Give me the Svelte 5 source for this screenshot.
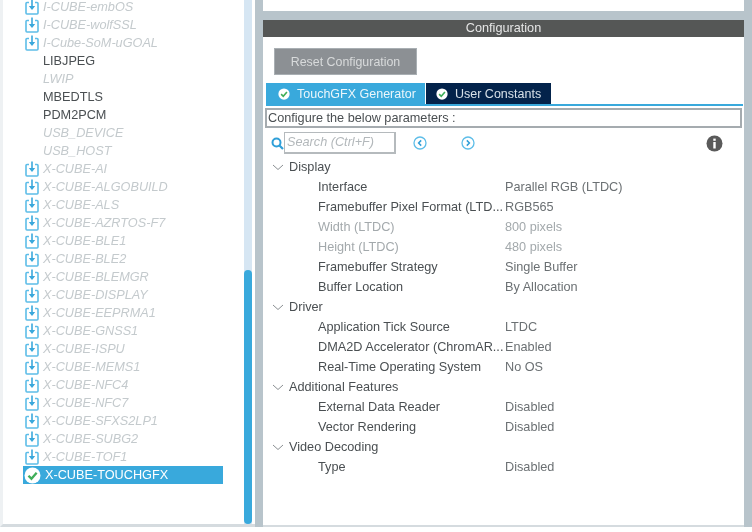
<script>
  const components = [
    { name: 'I-CUBE-embOS', kind: 'pack' },
    { name: 'I-CUBE-wolfSSL', kind: 'pack' },
    { name: 'I-Cube-SoM-uGOAL', kind: 'pack' },
    { name: 'LIBJPEG', kind: 'plain' },
    { name: 'LWIP', kind: 'off' },
    { name: 'MBEDTLS', kind: 'plain' },
    { name: 'PDM2PCM', kind: 'plain' },
    { name: 'USB_DEVICE', kind: 'off' },
    { name: 'USB_HOST', kind: 'off' },
    { name: 'X-CUBE-AI', kind: 'pack' },
    { name: 'X-CUBE-ALGOBUILD', kind: 'pack' },
    { name: 'X-CUBE-ALS', kind: 'pack' },
    { name: 'X-CUBE-AZRTOS-F7', kind: 'pack' },
    { name: 'X-CUBE-BLE1', kind: 'pack' },
    { name: 'X-CUBE-BLE2', kind: 'pack' },
    { name: 'X-CUBE-BLEMGR', kind: 'pack' },
    { name: 'X-CUBE-DISPLAY', kind: 'pack' },
    { name: 'X-CUBE-EEPRMA1', kind: 'pack' },
    { name: 'X-CUBE-GNSS1', kind: 'pack' },
    { name: 'X-CUBE-ISPU', kind: 'pack' },
    { name: 'X-CUBE-MEMS1', kind: 'pack' },
    { name: 'X-CUBE-NFC4', kind: 'pack' },
    { name: 'X-CUBE-NFC7', kind: 'pack' },
    { name: 'X-CUBE-SFXS2LP1', kind: 'pack' },
    { name: 'X-CUBE-SUBG2', kind: 'pack' },
    { name: 'X-CUBE-TOF1', kind: 'pack' },
    { name: 'X-CUBE-TOUCHGFX', kind: 'selected' }
  ];

  const groups = [
    {
      title: 'Display',
      rows: [
        { label: 'Interface', value: 'Parallel RGB (LTDC)' },
        { label: 'Framebuffer Pixel Format (LTD...', value: 'RGB565' },
        { label: 'Width (LTDC)', value: '800 pixels', muted: true },
        { label: 'Height (LTDC)', value: '480 pixels', muted: true },
        { label: 'Framebuffer Strategy', value: 'Single Buffer' },
        { label: 'Buffer Location', value: 'By Allocation' }
      ]
    },
    {
      title: 'Driver',
      rows: [
        { label: 'Application Tick Source', value: 'LTDC' },
        { label: 'DMA2D Accelerator (ChromAR...', value: 'Enabled' },
        { label: 'Real-Time Operating System', value: 'No OS' }
      ]
    },
    {
      title: 'Additional Features',
      rows: [
        { label: 'External Data Reader', value: 'Disabled' },
        { label: 'Vector Rendering', value: 'Disabled' }
      ]
    },
    {
      title: 'Video Decoding',
      rows: [{ label: 'Type', value: 'Disabled' }]
    }
  ];
</script>

{#snippet check(size)}
  <svg width={size} height={size} viewBox="0 0 16 16" class="check">
    <circle cx="8" cy="8" r="7.5" fill="#fff" />
    <path d="M4.2 8.2 L7 11 L11.9 5.4" fill="none" stroke="#3fae5a" stroke-width="2.2" />
  </svg>
{/snippet}

<div class="window">
  <aside class="left">
    <div class="list">
      {#each components as item}
        <div class="row {item.kind}">
          <span class="icon">
            {#if item.kind === 'pack'}
              <svg width="14" height="16" viewBox="0 0 14 16">
                <path d="M4 3.5 H2 Q1 3.5 1 4.5 V14 Q1 15 2 15 H12 Q13 15 13 14 V4.5 Q13 3.5 12 3.5 H10" fill="none" stroke="#5dbde8" stroke-width="1.6" />
                <path d="M7 0.5 V8" stroke="#3aa8dc" stroke-width="1.6" />
                <path d="M3.8 7 H10.2 L7 11 Z" fill="#3aa8dc" />
              </svg>
            {:else if item.kind === 'selected'}
              {@render check(17)}
            {/if}
          </span>
          <span class="name">{item.name}</span>
        </div>
      {/each}
    </div>
    <div class="track"><div class="thumb"></div></div>
  </aside>

  <main class="right">
    <div class="top-strip"></div>
    <section class="panel">
      <header class="title">Configuration</header>
      <button class="reset">Reset Configuration</button>
      <div class="tabs">
        <div class="tab active">{@render check(12)}<span>TouchGFX Generator</span></div>
        <div class="tab">{@render check(12)}<span>User Constants</span></div>
      </div>
      <div class="hint">Configure the below parameters :</div>
      <div class="search-bar">
        <svg class="lens" width="13" height="13" viewBox="0 0 13 13">
          <circle cx="5.5" cy="5.5" r="4" fill="none" stroke="#2f9fd8" stroke-width="2" />
          <path d="M8.5 8.5 L12 12" stroke="#2f9fd8" stroke-width="2.2" />
        </svg>
        <div class="search">Search (Ctrl+F)</div>
        <svg class="nav first" width="14" height="14" viewBox="0 0 14 14">
          <circle cx="7" cy="7" r="6" fill="none" stroke="#5dbde8" stroke-width="1.3" />
          <path d="M8.2 4.4 L5.6 7 L8.2 9.6" fill="none" stroke="#2f9fd8" stroke-width="1.5" />
        </svg>
        <svg class="nav" width="14" height="14" viewBox="0 0 14 14">
          <circle cx="7" cy="7" r="6" fill="none" stroke="#5dbde8" stroke-width="1.3" />
          <path d="M5.8 4.4 L8.4 7 L5.8 9.6" fill="none" stroke="#2f9fd8" stroke-width="1.5" />
        </svg>
        <svg class="info" width="17" height="17" viewBox="0 0 17 17">
          <circle cx="8.5" cy="8.5" r="8" fill="#5a5a5a" />
          <rect x="7.3" y="7" width="2.4" height="6.5" fill="#fff" />
          <rect x="7.3" y="3.6" width="2.4" height="2.2" fill="#fff" />
        </svg>
      </div>
      <div class="params">
        {#each groups as group}
          <div class="group">
            <svg width="12" height="7" viewBox="0 0 12 7">
              <path d="M1 1 L6 5.5 L11 1" fill="none" stroke="#8a8f92" stroke-width="1" />
            </svg>
            <span>{group.title}</span>
          </div>
          {#each group.rows as row}
            <div class="param" class:muted={row.muted}>
              <span class="label">{row.label}</span>
              <span class="value">{row.value}</span>
            </div>
          {/each}
        {/each}
      </div>
    </section>
  </main>
</div>

<style>
  :global(body) {
    background: #fff;
  }

  .window {
    display: flex;
    width: 752px;
    height: 532px;
    overflow: hidden;
    font-family: "Liberation Sans", Arial, sans-serif;
    font-size: 12.7px;
    color: #4a4f52;
    filter: blur(0.3px);
  }

  .left {
    display: flex;
    justify-content: space-between;
    box-sizing: border-box;
    width: 255px;
    height: 527px;
    background: #fff;
    border-left: 3px solid #eef1f3;
    border-bottom: 3px solid #d5dbdf;
  }

  .list {
    margin-top: -2px;
    padding-left: 20px;
    width: 200px;
  }

  .row {
    display: flex;
    align-items: center;
    width: 200px;
    height: 18px;
  }

  .icon {
    display: flex;
    justify-content: center;
    align-items: center;
    width: 18px;
    margin-right: 2px;
    height: 18px;
  }

  .name {
    white-space: nowrap;
  }

  .row.pack .name,
  .row.off .name {
    font-style: italic;
    color: #c4cacd;
  }

  .row.selected {
    background: #39a9dc;
    color: #fff;
  }

  .row.selected .name {
    margin-left: 2px;
  }

  .track {
    width: 8px;
    margin-right: 3px;
    background: #d6e6f3;
  }

  .thumb {
    margin-top: 270px;
    height: 254px;
    background: #39a9dc;
    border-radius: 4px;
  }

  .right {
    display: flex;
    flex-direction: column;
    padding: 0 8px;
    width: 497px;
    box-sizing: border-box;
    height: 527px;
    background: #b8c4cb;
  }

  .top-strip {
    height: 11px;
    background: #fff;
    flex: none;
  }

  .panel {
    flex: 1;
    margin-top: 9px;
    background: #fff;
    border-bottom: 2px solid #d5dbdf;
    min-height: 0;
  }

  .title {
    height: 17px;
    line-height: 17px;
    background: #555756;
    color: #e6e6e6;
    text-align: center;
  }

  .reset {
    display: block;
    margin: 11px 0 0 11px;
    width: 143px;
    height: 27px;
    padding: 0;
    border: 1px solid #a9afb3;
    background: #8c9094;
    color: #d8dadb;
    font: inherit;
    font-size: 12.4px;
  }

  .tabs {
    display: flex;
    margin: 8px 1px 0 3px;
    gap: 1px;
    border-bottom: 2px solid #39a9dc;
    font-size: 12.5px;
  }

  .tab {
    display: flex;
    align-items: center;
    gap: 7px;
    height: 21px;
    padding-left: 10px;
    width: 125px;
    box-sizing: border-box;
    background: #03234b;
    color: #d7e0e8;
  }

  .tab.active {
    width: 159px;
    padding-left: 12px;
    background: #39a9dc;
    color: #eaf6fb;
  }

  .hint {
    box-sizing: border-box;
    margin: 2px 2px 0;
    height: 20px;
    line-height: 17px;
    border: 2px solid #a5abaf;
    padding-left: 1px;
    white-space: nowrap;
  }

  .search-bar {
    display: flex;
    align-items: center;
    height: 22px;
    margin-top: 4px;
    padding-left: 8px;
  }

  .search {
    box-sizing: border-box;
    width: 112px;
    height: 22px;
    line-height: 18px;
    padding-left: 2px;
    border: 2px solid #b5babd;
    border-width: 1px 2px 2px 1px;
    font-style: italic;
    color: #b3b8bb;
  }

  .nav {
    margin-left: 34px;
  }

  .nav.first {
    margin-left: 17px;
  }

  .info {
    margin-left: 231px;
  }

  .params {
    margin-top: 3px;
  }

  .group {
    display: flex;
    align-items: center;
    height: 20px;
    padding-left: 9px;
    gap: 5px;
    color: #4a4f52;
  }

  .param {
    display: flex;
    height: 20px;
    line-height: 21px;
    padding-left: 55px;
  }

  .label {
    width: 187px;
    white-space: nowrap;
  }

  .value {
    color: #6b7073;
  }

  .param.muted .label,
  .param.muted .value {
    color: #a3a9ac;
  }
</style>
